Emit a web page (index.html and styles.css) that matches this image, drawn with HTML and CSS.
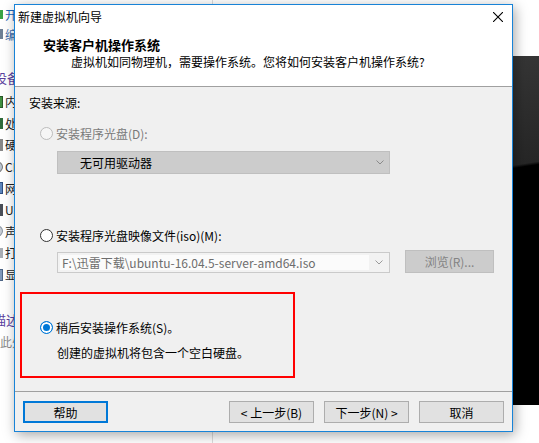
FILE: index.html
```html
<!DOCTYPE html>
<html lang="zh-CN">
<head>
    <meta charset="UTF-8">
    <title>新建虚拟机向导</title>
    <link rel="stylesheet" href="styles.css">
</head>
<body>
<div class="desktop">
    <!-- Janela principal do VMware ao fundo -->
    <div class="host">
        <div class="side">
            <div class="cmd"><span class="ico ico-play"></span>开启此虚拟机</div>
            <div class="cmd cmd-edit"><span class="ico ico-edit"></span>编辑虚拟机设置</div>
            <div class="side-head">设备</div>
            <div class="dev"><span class="ico ico-mem"></span>内存</div>
            <div class="dev"><span class="ico ico-cpu"></span>处理器</div>
            <div class="dev"><span class="ico ico-hdd"></span>硬盘 (SCSI)</div>
            <div class="dev"><span class="ico ico-cd"></span>CD/DVD (SATA)</div>
            <div class="dev"><span class="ico ico-net"></span>网络适配器</div>
            <div class="dev"><span class="ico ico-usb"></span>USB 控制器</div>
            <div class="dev"><span class="ico ico-snd"></span>声卡</div>
            <div class="dev"><span class="ico ico-prn"></span>打印机</div>
            <div class="dev"><span class="ico ico-mon"></span>显示器</div>
            <div class="side-head side-desc">描述</div>
            <div class="side-note">在此处键入对该虚拟机的描述。</div>
        </div>
        <div class="pane">
            <div class="preview"></div>
        </div>
    </div>

    <!-- Diálogo do assistente -->
    <div class="wizard">
        <div class="titlebar">
            <span>新建虚拟机向导</span>
            <svg width="10" height="10" viewBox="0 0 10 10"><path d="M0 0L10 10M10 0L0 10" stroke="#000" stroke-width="1.1"/></svg>
        </div>
        <div class="head">
            <h1>安装客户机操作系统</h1>
            <p>虚拟机如同物理机，需要操作系统。您将如何安装客户机操作系统?</p>
        </div>
        <div class="body">
            <div class="src-label">安装来源:</div>
            <div class="option off"><span class="radio"></span>安装程序光盘(D):</div>
            <div class="combo combo-off">
                <span>无可用驱动器</span>
                <svg width="8" height="5" viewBox="0 0 8 5"><path d="M0.5 0.5L4 4L7.5 0.5" fill="none" stroke="#8a8a8a"/></svg>
            </div>
            <div class="option option-iso"><span class="radio"></span>安装程序光盘映像文件(iso)(M):</div>
            <div class="iso-row">
                <div class="combo combo-iso">
                    <span class="combo-text">F:\迅雷下载\ubuntu-16.04.5-server-amd64.iso</span>
                    <svg width="8" height="5" viewBox="0 0 8 5"><path d="M0.5 0.5L4 4L7.5 0.5" fill="none" stroke="#9a9a9a"/></svg>
                </div>
                <button class="btn-browse">浏览(R)...</button>
            </div>
            <div class="mark">
                <div class="option"><span class="radio on"></span>稍后安装操作系统(S)。</div>
                <p class="note">创建的虚拟机将包含一个空白硬盘。</p>
            </div>
        </div>
        <div class="foot">
            <button class="btn btn-focus">帮助</button>
            <div class="nav">
                <button class="btn">&lt; 上一步(B)</button>
                <button class="btn">下一步(N) &gt;</button>
                <button class="btn">取消</button>
            </div>
        </div>
    </div>
</div>
</body>
</html>
```

FILE: styles.css
```css
body {
    margin: 0;
    font-family: "Noto Sans CJK SC", "Microsoft YaHei", sans-serif;
    font-size: 12px;
    color: #000;
}
.desktop {
    position: relative;
    width: 539px;
    height: 443px;
    overflow: hidden;
    background: #fff;
}
/* Janela de fundo */
.host {
    display: grid;
    grid-template-columns: 213px 1fr;
    height: 100%;
}
.side {
    border-right: 1px solid #dcdcdc;
    padding-top: 4px;
}
.cmd, .dev {
    display: flex;
    align-items: center;
    gap: 2px;
    margin-left: -10px;
    white-space: nowrap;
}
.cmd {
    height: 20px;
    color: #1d64b8;
}
.cmd-edit {
    color: #3b6aa8;
}
.dev {
    height: 21.6px;
    color: #222;
}
.ico {
    width: 13px;
    height: 12px;
    flex: none;
    box-sizing: border-box;
}
.ico-play { background: #3aa346; height: 9px; }
.ico-edit { background: #6f7f95; height: 10px; }
.ico-mem { background: #3f8f3f; border: 1px solid #2a5a2a; }
.ico-cpu { background: #2f6b3b; height: 11px; }
.ico-hdd { background: #888; }
.ico-cd { background: #b9c4d0; border-radius: 50%; border: 1px solid #777; }
.ico-net { background: #5d86bd; border: 1px solid #2f4f80; }
.ico-usb { background: #4a4f58; }
.ico-snd { background: #c6ccd4; border-radius: 50%; border: 1px solid #8893a0; }
.ico-prn { background: #a8adb4; height: 10px; }
.ico-mon { background: #7f98ba; border: 1px solid #4d6586; }
.side-head {
    height: 20px;
    line-height: 20px;
    margin: 24px 0 3px -6px;
    font-size: 13px;
    color: #5a3f9e;
    white-space: nowrap;
}
.side-desc {
    margin: 25px 0 2px -7px;
}
.side-note {
    margin-left: -12px;
    line-height: 20px;
    color: #8a8a8a;
    white-space: nowrap;
}
.pane {
    display: flex;
    flex-direction: column;
    padding: 56px 0 38px;
}
.preview {
    flex: 1;
    background: linear-gradient(171deg, #3c3c3c 0, #262626 155px, #000 158px, #000 100%);
}
/* Diálogo */
.wizard {
    position: absolute;
    left: 14px;
    top: 4px;
    width: 499px;
    height: 428px;
    box-sizing: border-box;
    border: 1px solid #1883d7;
    background: #f0f0f0;
    display: flex;
    flex-direction: column;
    box-shadow: 2px 3px 12px rgba(0, 0, 0, 0.35);
}
.titlebar {
    height: 23px;
    flex: none;
    display: flex;
    align-items: center;
    justify-content: space-between;
    padding: 0 9px 0 3px;
    background: #fff;
}
.head {
    flex: none;
    background: #fff;
    padding: 9px 0 16px 28px;
    border-bottom: 1px solid #a0a0a0;
}
.head h1 {
    margin: 0;
    font-size: 13px;
    line-height: 16px;
    font-weight: bold;
}
.head p {
    margin: 1px 0 0 28px;
    line-height: 16px;
}
.body {
    flex: 1;
    padding: 8px 0 0 14px;
}
.src-label {
    line-height: 16px;
}
.option {
    display: flex;
    align-items: center;
    height: 16px;
    padding-left: 11px;
    margin-top: 14px;
}
.option.off {
    color: #7a7a7a;
}
.option-iso {
    margin-top: 53px;
}
.radio {
    width: 13px;
    height: 13px;
    box-sizing: border-box;
    border: 1px solid #333;
    border-radius: 50%;
    background: #fff;
    margin-right: 3px;
}
.off .radio {
    border-color: #bcbcbc;
    background: #f6f6f6;
}
.radio.on {
    border-color: #0078d7;
    background: #0078d7;
    box-shadow: inset 0 0 0 2px #fff;
}
.combo {
    display: flex;
    align-items: center;
    box-sizing: border-box;
    width: 333px;
}
.combo-off {
    height: 23px;
    margin: 10px 0 0 28px;
    padding: 0 5px 0 22px;
    background: #cccccc;
    border: 1px solid #bfbfbf;
    justify-content: space-between;
}
.iso-row {
    display: flex;
    align-items: flex-start;
    margin: 7px 0 0 28px;
}
.combo-iso {
    height: 21px;
    margin-top: 2px;
    padding: 2px 6px 2px 2px;
    background: #f2f2f2;
    border: 1px solid #cacaca;
}
.combo-text {
    flex: 1;
    height: 100%;
    line-height: 15px;
    padding-left: 2px;
    margin-right: 6px;
    background: #fbfbfb;
    color: #6d6d6d;
    white-space: nowrap;
}
.btn-browse {
    width: 89px;
    height: 23px;
    margin-left: 15px;
    background: #cccccc;
    border: 1px solid #bfbfbf;
    color: #838383;
    font: inherit;
    padding: 0;
}
.mark {
    width: 275px;
    box-sizing: border-box;
    margin: 19px 0 0 -9px;
    padding: 25px 0 15px 7px;
    border: 2px solid #ff0000;
}
.mark .option {
    margin-top: 0;
}
.note {
    margin: 10px 0 0 28px;
    line-height: 16px;
}
.foot {
    flex: none;
    display: flex;
    justify-content: space-between;
    padding: 9px 8px 8px;
    border-top: 1px solid #a0a0a0;
}
.nav {
    display: flex;
    gap: 10px;
}
.btn {
    width: 85px;
    height: 22px;
    padding: 0;
    background: #e1e1e1;
    border: 1px solid #adadad;
    font: inherit;
    color: #000;
}
.btn-focus {
    border: 2px solid #0078d7;
}
```
